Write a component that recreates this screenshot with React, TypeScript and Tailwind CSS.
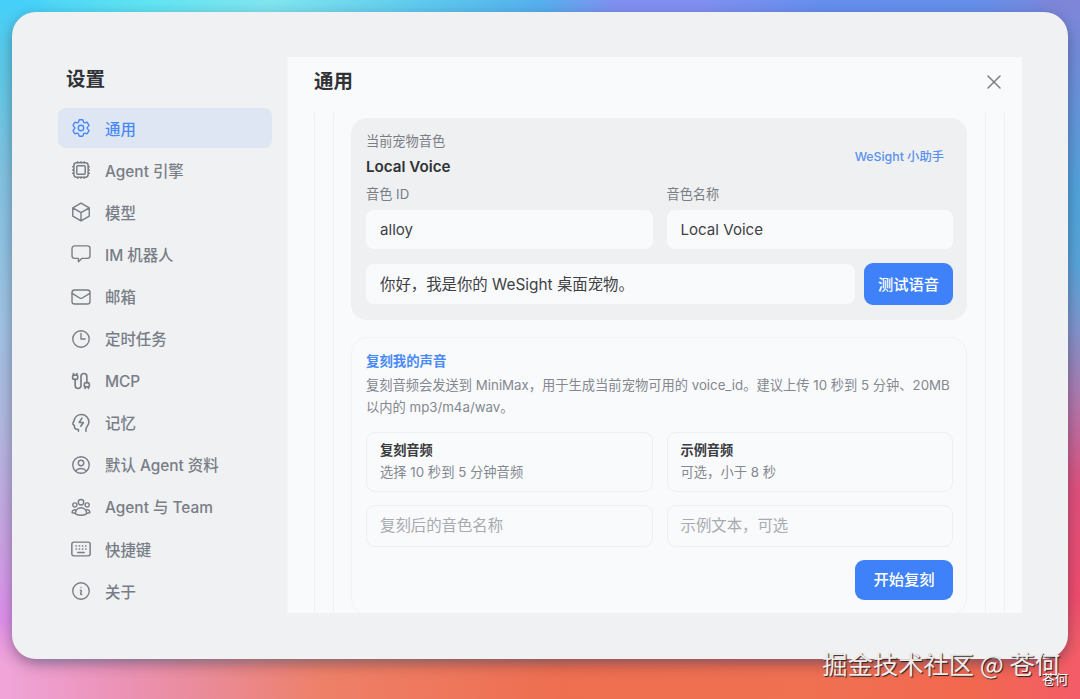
import type { ReactNode } from 'react'
import {
  HiOutlineClock,
  HiOutlineCog6Tooth,
  HiOutlineCube,
  HiOutlineInformationCircle,
  HiOutlineUserCircle,
  HiOutlineUserGroup,
  HiOutlineXMark,
} from 'react-icons/hi2'
import { Cable } from 'lucide-react'

const ChipIcon = () => (
  <svg viewBox="0 0 24 24" className="size-[22px]" fill="none" stroke="currentColor" strokeWidth="1.6" strokeLinecap="round" strokeLinejoin="round">
    <rect x="4.2" y="4.2" width="15.6" height="15.6" rx="3" />
    <rect x="7.4" y="7.4" width="9.2" height="9.2" rx="1" />
    <path d="M8.500 2.900v1M12 2.900v1M15.500 2.900v1M8.500 20.100v1M12 20.100v1M15.500 20.100v1M2.900 8.500h1M2.900 12h1M2.900 15.500h1M20.100 8.500h1M20.100 12h1M20.100 15.500h1" />
  </svg>
)

const BubbleIcon = () => (
  <svg viewBox="0 0 24 24" className="size-[22px]" fill="none" stroke="currentColor" strokeWidth="1.5" strokeLinecap="round" strokeLinejoin="round">
    <path d="M5 3.2h14a2.8 2.8 0 0 1 2.8 2.8v8a2.8 2.8 0 0 1-2.8 2.8h-6.2L9.2 20.4v-3.6H5A2.8 2.8 0 0 1 2.2 14V6A2.8 2.8 0 0 1 5 3.2Z" />
  </svg>
)

const MailIcon = () => (
  <svg viewBox="0 0 24 24" className="size-[22px]" fill="none" stroke="currentColor" strokeWidth="1.5" strokeLinecap="round" strokeLinejoin="round">
    <rect x="2.2" y="4.4" width="19.6" height="15.2" rx="2.8" />
    <path d="m2.4 8 8.2 5.1a2.6 2.6 0 0 0 2.8 0L21.6 8" />
  </svg>
)

const MemoryIcon = () => (
  <svg viewBox="0 0 24 24" className="size-[22px]" fill="none" stroke="currentColor" strokeWidth="1.7" strokeLinecap="round" strokeLinejoin="round">
    <path d="M9.2 21v-1.9c-2.9 0-4.4-.6-4.4-3v-1.6l-1.5-1c-.4-.3-.4-.7-.2-1.1l1.3-2.800C5 5.700 8.300 2.800 12.600 2.800a8 8 0 0 1 8 8c0 4.200-3.200 5-3.200 8.500V21" />
    <path d="M13 6.600 10 11.400h4.600l-2.800 4.200" />
  </svg>
)

const KeyboardIcon = () => (
  <svg viewBox="0 0 24 24" className="size-[22px]" fill="none" stroke="currentColor" strokeWidth="1.6" strokeLinecap="round" strokeLinejoin="round">
    <rect x="2" y="4.500" width="20" height="15" rx="2.200" />
    <path d="M6.500 8.700h.5M10 8.700h.5M13.500 8.700h.5M17 8.700h.5M6.500 12h.5M10 12h.5M13.500 12h.5M17 12h.5M8.500 15.700h7" />
  </svg>
)

interface NavItem {
  label: string
  icon: ReactNode
}

const navItems: NavItem[] = [
  { label: '通用', icon: <HiOutlineCog6Tooth className="size-[22px]" /> },
  { label: 'Agent 引擎', icon: <ChipIcon /> },
  { label: '模型', icon: <HiOutlineCube className="size-[22px]" /> },
  { label: 'IM 机器人', icon: <BubbleIcon /> },
  { label: '邮箱', icon: <MailIcon /> },
  { label: '定时任务', icon: <HiOutlineClock className="size-[22px]" /> },
  { label: 'MCP', icon: <Cable className="mx-px size-5" strokeWidth={2} /> },
  { label: '记忆', icon: <MemoryIcon /> },
  { label: '默认 Agent 资料', icon: <HiOutlineUserCircle className="size-[22px]" /> },
  { label: 'Agent 与 Team', icon: <HiOutlineUserGroup className="size-[22px]" /> },
  { label: '快捷键', icon: <KeyboardIcon /> },
  { label: '关于', icon: <HiOutlineInformationCircle className="size-[22px]" /> },
]

const Sidebar = () => (
  <aside className="w-[275px] shrink-0 pt-[51px] pl-[46px]">
    <h1 className="pl-2 text-[19.5px] leading-8 font-bold text-[#303236]">设置</h1>
    <nav className="mt-[13px] flex w-[214px] flex-col gap-[2px]">
      {navItems.map((item, index) => (
        <div
          key={item.label}
          className={
            index === 0
              ? 'flex h-[40.2px] items-center gap-[13px] rounded-lg bg-[#dee6f3] pl-3 text-[15.4px] font-medium whitespace-nowrap text-[#4688f5]'
              : 'flex h-[40.1px] items-center gap-[13px] rounded-lg pl-3 text-[15.4px] font-medium whitespace-nowrap text-[#787d86]'
          }
        >
          {item.icon}
          <span className="pt-[2px]">{item.label}</span>
        </div>
      ))}
    </nav>
  </aside>
)

const VoiceCard = () => (
  <section className="h-[202px] w-[616px] rounded-2xl bg-[#eff0f2] px-[15px] pt-[13px] pr-[14px]">
    <div className="flex items-center justify-between pr-[9px]">
      <div>
        <p className="text-[13.2px] leading-[21px] text-[#797d84]">当前宠物音色</p>
        <p className="pt-[2px] text-[15.2px] leading-[26px] font-semibold text-[#303236]">Local Voice</p>
      </div>
      <span className="pt-1 text-[12.3px] font-medium text-[#5891ee]">WeSight 小助手</span>
    </div>
    <div className="mt-1 grid grid-cols-2 gap-[14px]">
      {[['音色 ID', 'alloy'], ['音色名称', 'Local Voice']].map(([label, value]) => (
        <div key={label}>
          <p className="text-[13.2px] leading-5 text-[#797d84]">{label}</p>
          <div className="mt-[6px] flex h-[39px] items-center rounded-lg bg-[#f9fafc] px-[14px] pt-[2px] text-[15.1px] text-[#3f4145]">{value}</div>
        </div>
      ))}
    </div>
    <div className="mt-[14px] flex items-center gap-[9px]">
      <div className="flex h-10 flex-1 items-center rounded-lg bg-[#f9fafc] px-[14px] pt-[2px] text-[15.4px] text-[#3f4145]">
        你好，我是你的 WeSight 桌面宠物。
      </div>
      <button className="h-[42px] w-[89px] rounded-[9px] bg-[#3e81f8] pt-[2px] text-[15.3px] font-medium text-white">测试语音</button>
    </div>
  </section>
)

const CloneCard = () => (
  <section className="mt-[17px] h-[278px] w-[616px] rounded-2xl border border-[#f1f3f5] pt-[12px] pr-[13px] pl-[14px]">
    <h3 className="text-[13.4px] leading-[22px] font-bold text-[#4a8af6]">复刻我的声音</h3>
    <p className="mt-[2px] text-[13.27px] leading-[22px] whitespace-nowrap text-[#84888f]">
      复刻音频会发送到 MiniMax，用于生成当前宠物可用的 voice_id。建议上传 10 秒到 5 分钟、20MB
      <br />
      以内的 mp3/m4a/wav。
    </p>
    <div className="mt-[14px] grid grid-cols-2 gap-x-[14px] gap-y-[13px]">
      {[['复刻音频', '选择 10 秒到 5 分钟音频'], ['示例音频', '可选，小于 8 秒']].map(([title, hint]) => (
        <div key={title} className="h-[60px] rounded-[9px] border border-[#edeff2] px-[13px] pt-[6px]">
          <p className="text-[13.2px] leading-[22px] font-bold text-[#3a3c40]">{title}</p>
          <p className="text-[13.3px] leading-[22px] text-[#84888f]">{hint}</p>
        </div>
      ))}
      {['复刻后的音色名称', '示例文本，可选'].map((placeholder) => (
        <div key={placeholder} className="flex h-[42px] items-center rounded-[9px] border border-[#edeff2] px-[13px] text-[15.4px] text-[#a7abb1]">
          {placeholder}
        </div>
      ))}
    </div>
    <div className="mt-[13px] flex justify-end">
      <button className="h-10 w-[98px] rounded-[9px] bg-[#3e81f8] text-[15.3px] font-medium text-white">开始复刻</button>
    </div>
  </section>
)

export default function App() {
  return (
    <div className="relative h-[699px] w-[1080px] overflow-hidden bg-[linear-gradient(90deg,#44d0fa_0%,#5fe3f2_13%,#80e5ef_25%,#5cc8ee_40%,#55b0ee_50%,#8090f0_57%,#8090f0_65%,#638fee_77%,#6590ea_90%,#7f85d8_100%)] font-['Inter','Noto_Sans_CJK_SC',sans-serif]">
      <div className="absolute inset-y-0 left-0 w-12 bg-[linear-gradient(180deg,#44d0fa_0%,#5ccbe8_9%,#83c4e2_25%,#9fc4e4_45%,#b4b8e0_62%,#c8a5e2_76%,#e08fec_89%,#f0a5da_100%)] [mask-image:linear-gradient(90deg,#000_50%,transparent)]" />
      <div className="absolute inset-y-0 right-0 w-12 bg-[linear-gradient(180deg,#7f85d8_0%,#6f8fdc_10%,#50a5dc_28%,#58a5da_38%,#8095cc_47%,#b07aae_57%,#e0507c_70%,#f04c6c_85%,#f5706a_100%)] [mask-image:linear-gradient(270deg,#000_50%,transparent)]" />
      <div className="absolute inset-x-0 bottom-0 h-20 bg-[linear-gradient(90deg,#f0a5da_0%,#ec94ba_10%,#ea8a94_20%,#ee8068_30%,#ee6e50_52%,#f07052_75%,#f2684e_90%,#f45c68_100%)] [mask-image:linear-gradient(0deg,#000_40%,transparent)]" />

      <main className="absolute top-3 left-3 flex h-[647px] w-[1056px] rounded-[24px] bg-[#eff1f3] shadow-[0_5px_14px_rgba(35,30,60,0.42)]">
        <Sidebar />
        <div className="mt-[45px] flex h-[556px] w-[735px] flex-col overflow-hidden border-l border-[#f4f6f8] bg-[#f9fafc]">
          <header className="flex h-[56px] shrink-0 items-center justify-between pr-[16px] pb-[6px] pl-[26px]">
            <h2 className="text-[19.5px] font-bold text-[#303236]">通用</h2>
            <HiOutlineXMark className="size-6 text-[#7b7f86]" />
          </header>
          <div className="ml-[26px] min-h-0 w-[691px] flex-1 border-x border-[#f0f1f4] px-[18px]">
            <div className="h-full border-x border-[#f0f1f4] px-[17px] pt-[5px]">
              <VoiceCard />
              <CloneCard />
            </div>
          </div>
        </div>
      </main>

      <div className="absolute right-[20px] bottom-[18px] font-['Noto_Sans_CJK_SC',sans-serif] text-[25.3px] leading-9 whitespace-nowrap text-[#f0ebe9] [text-shadow:1px_1px_1px_#222]">
        掘金技术社区 @ 苍何
      </div>
      <div className="absolute right-[12px] bottom-[11px] font-['Noto_Sans_CJK_SC',sans-serif] text-[13px] leading-[18px] whitespace-nowrap text-white [text-shadow:1px_1px_1px_#222]">
        苍何
      </div>
    </div>
  )
}
